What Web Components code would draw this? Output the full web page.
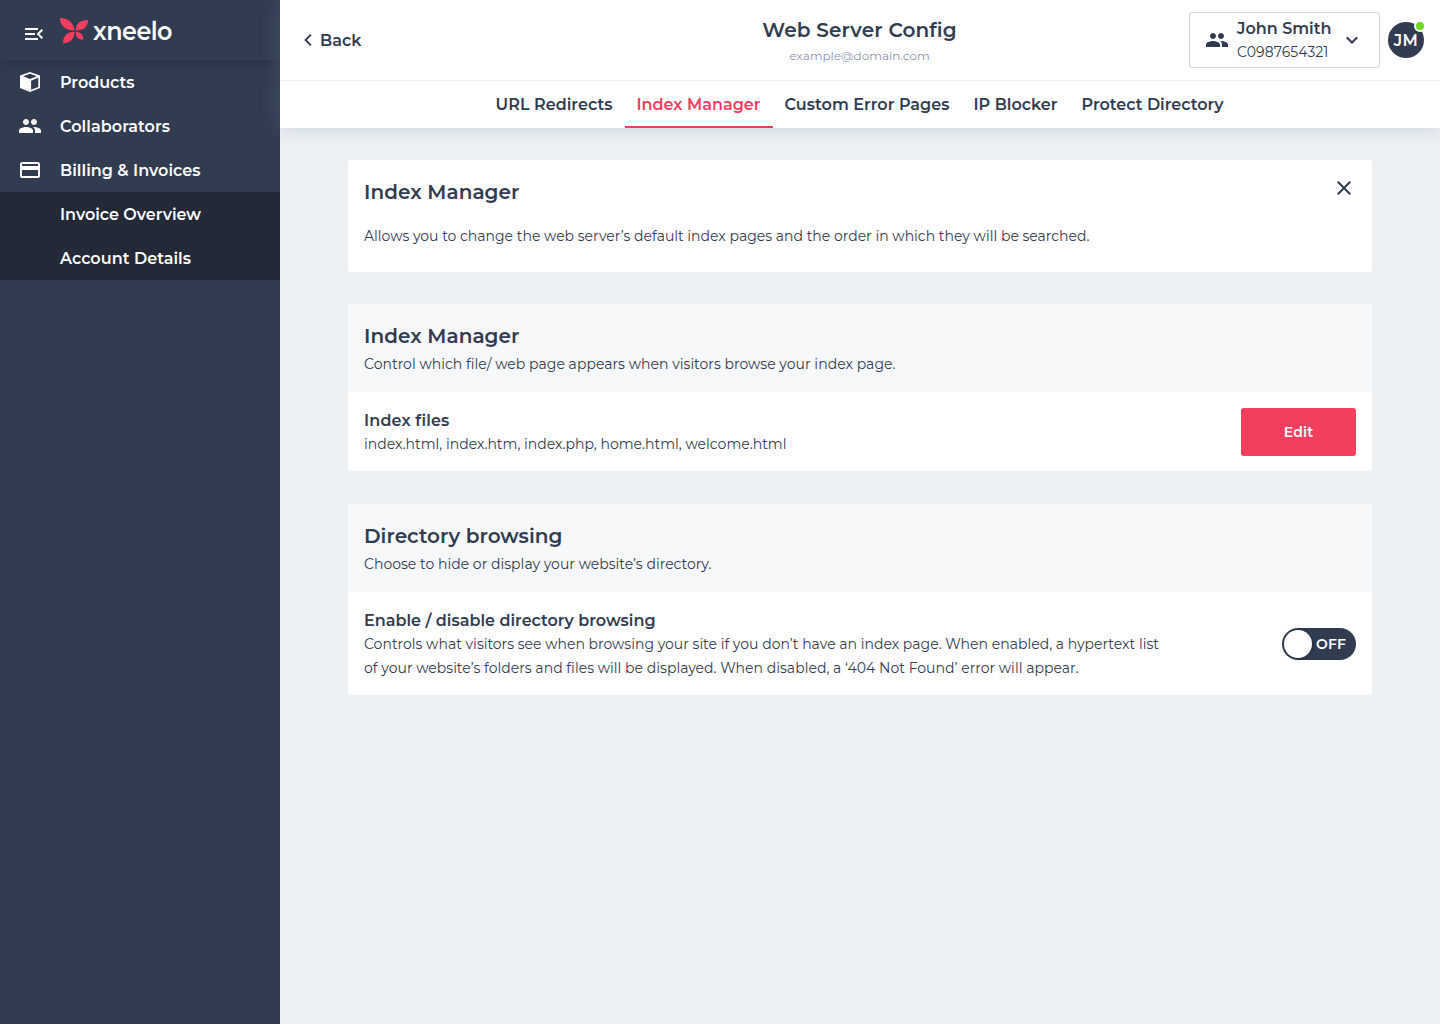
<!DOCTYPE html>
<html lang="en">
<head>
<meta charset="utf-8">
<title>Web Server Config</title>
<style>
  html, body { margin: 0; height: 100%; }
  body { font-family: Montserrat, Inter, "Liberation Sans", sans-serif; color: #323c50; background: #edf1f4; overflow: hidden; }
</style>
</head>
<body>
<app-shell></app-shell>
<script>
const define = (name, html, setup) => customElements.define(name, class extends HTMLElement {
  connectedCallback() {
    if (this.shadowRoot) return;
    const t = document.createElement('template');
    t.innerHTML = html;
    this.attachShadow({ mode: 'open' }).append(t.content.cloneNode(true));
    if (setup) setup(this, this.shadowRoot);
  }
});

/* One line of text whose advance is set in pixels: w = width, s = size, b = weight, h = line height, x = horizontal scale */
define('fit-text', `<style>
  :host { display: block; white-space: nowrap; flex: none; }
  span { display: inline-block; vertical-align: top; transform-origin: 0 50%; }
</style><span><slot></slot></span>`, (el, root) => {
  const w = +el.getAttribute('w');
  const s = +(el.getAttribute('s') || 16);
  const h = +(el.getAttribute('h') || 24);
  const x = +(el.getAttribute('x') || 1);
  /* the 16px labels sit one pixel lower in their row */
  el.style.cssText += `;width:${w}px;height:${h}px;font-size:${s}px;font-weight:${el.getAttribute('b') || 600};line-height:${s === 16 ? h + 2 : h}px`;
  const span = root.querySelector('span');
  const natural = span.getBoundingClientRect().width;
  span.style.letterSpacing = ((w / x - natural) / el.textContent.length) + 'px';
  if (x !== 1) span.style.transform = `scaleX(${x})`;
});

const icons = {
  menu: '<path d="M3 18h13v-2H3v2zM3 13h10v-2H3v2zM3 6v2h13V6H3zM21 15.59 17.42 12 21 8.41 19.59 7l-5 5 5 5L21 15.59z"/>',
  box: '<path fill-rule="evenodd" d="M12 1.900 2 5.600v12.500l10 3.900 10-3.900V5.600zM12 3.700l6.800 2.600L12 9.100 5.200 6.300zM20.300 7.800v9.100L13.100 19.800V10.800z"/>',
  people: '<path d="M16 11c1.66 0 2.99-1.34 2.99-3S17.66 5 16 5s-3 1.34-3 3 1.34 3 3 3zm-8 0c1.66 0 2.99-1.34 2.99-3S9.66 5 8 5 5 6.34 5 8s1.34 3 3 3zm0 2c-2.33 0-7 1.17-7 3.5V19h14v-2.500c0-2.330-4.670-3.500-7-3.500zm8 0c-.29 0-.62.02-.97.05 1.160.84 1.970 1.970 1.970 3.450V19h6v-2.500c0-2.330-4.670-3.500-7-3.500z"/>',
  card: '<path d="M20 4H4c-1.110 0-1.990.89-1.990 2L2 18c0 1.110.89 2 2 2h16c1.110 0 2-.89 2-2V6c0-1.110-.89-2-2-2zm0 14H4v-6h16v6zm0-10H4V6h16v2z"/>',
  down: '<path fill="none" stroke="currentColor" stroke-width="2" d="M6.700 9.200 12 14.500l5.300-5.300"/>',
  left: '<path fill="none" stroke="currentColor" stroke-width="1.900" d="M14.900 6.700 9.600 12l5.300 5.300"/>',
  close: '<path d="M19 6.410 17.590 5 12 10.590 6.410 5 5 6.410 10.590 12 5 17.590 6.410 19 12 13.410 17.590 19 19 17.590 13.410 12z"/>'
};
define('ui-icon', `<style>:host{display:block;flex:none;width:24px;height:24px}svg{display:block;width:100%;height:100%}</style>
<svg viewBox="0 0 24 24" fill="currentColor"></svg>`, (el, root) => {
  root.querySelector('svg').innerHTML = icons[el.getAttribute('name')];
});

define('brand-logo', `<style>
  :host { display: flex; align-items: flex-start; }
  svg { display: block; width: 28px; height: 26px; margin: 18px 5px 0 0; }
  fit-text { margin-top: 15px; }
</style>
<svg viewBox="0 0 28 26" fill="#f33e5f">
  <path d="M0 0C7 0 14 4.500 14.400 12.500C6 12.500 0 8 0 0z"/>
  <path d="M28 2C28 8.500 23.500 12.500 15.600 12.500C15.600 6 20 2 28 2z"/>
  <path d="M14.400 13.700C14.400 21 10 25.200 3 25.200C3 18 7 13.700 14.400 13.700z"/>
  <path d="M15.600 13.700C20.500 13.700 23.300 16.500 23.300 21.700C18.500 21.700 15.600 19 15.600 13.700z"/>
</svg>
<fit-text w="79" s="26.500" b="600" h="31" x="0.900">xneelo</fit-text>`);

define('nav-item', `<style>
  :host { display: flex; align-items: center; height: 44px; padding-left: 18px; box-sizing: border-box; }
  .icon { width: 24px; margin-right: 18px; }
</style><div class="icon"><slot name="icon"></slot></div><slot></slot>`);

define('side-bar', `<style>
  :host { display: block; width: 280px; flex: none; background: #323c50; color: #fff; }
  header { display: flex; height: 60px; padding-left: 22px; box-shadow: 0 0 16px rgba(30,37,52,.55); }
  header ui-icon { margin: 22px 14px 0 0; }
  nav { display: block; }
  .sub { background: #232936; }
</style>
<header><ui-icon name="menu"></ui-icon><brand-logo></brand-logo></header>
<nav>
  <nav-item><ui-icon slot="icon" name="box"></ui-icon><fit-text w="74.500">Products</fit-text></nav-item>
  <nav-item><ui-icon slot="icon" name="people"></ui-icon><fit-text w="110">Collaborators</fit-text></nav-item>
  <nav-item><ui-icon slot="icon" name="card"></ui-icon><fit-text w="140.500">Billing &amp; Invoices</fit-text></nav-item>
  <div class="sub">
    <nav-item><fit-text w="141">Invoice Overview</fit-text></nav-item>
    <nav-item><fit-text w="131">Account Details</fit-text></nav-item>
  </div>
</nav>`);

define('user-avatar', `<style>
  :host { display: flex; position: relative; width: 36px; height: 36px; border-radius: 50%; background: #323c50; color: #fff; align-items: center; justify-content: center; }
  i { position: absolute; right: -2px; top: -2px; width: 8px; height: 8px; border-radius: 50%; background: #6dd620; border: 2px solid #fff; }
</style><fit-text w="24.500">JM</fit-text><i></i>`);

define('account-picker', `<style>
  :host { display: flex; align-items: center; box-sizing: border-box; width: 191px; height: 56px; padding-left: 15px; border: 1px solid #d2d5da; border-radius: 3px; background: #fff; }
  div { width: 95px; margin: 0 8px; }
</style><ui-icon name="people"></ui-icon>
<div><fit-text w="94.500">John Smith</fit-text><fit-text w="91.500" s="14" b="400">C0987654321</fit-text></div>
<ui-icon name="down"></ui-icon>`);

define('tab-item', `<style>
  :host { display: flex; height: 47px; padding: 0 12px; box-sizing: border-box; align-items: center; border-bottom: 2px solid transparent; }
  :host([active]) { color: #f33e5f; border-color: #f33e5f; }
  ::slotted(*) { margin-top: 1px; }
</style><slot></slot>`);

define('top-bar', `<style>
  :host { display: block; position: relative; height: 128px; background: #fff; box-shadow: 0 0 20px rgba(110,130,180,.3); }
  .row { display: grid; grid-template-columns: 1fr auto 1fr; height: 80px; border-bottom: 1px solid #edf1f7; }
  .back { display: flex; align-items: center; padding-left: 16px; }
  .title { display: flex; flex-direction: column; align-items: center; padding: 16px 1px 0 0; }
  .mail { color: #8e96a8; }
  .user { display: flex; align-items: center; justify-content: flex-end; gap: 8px; padding-right: 16px; }
  .tabs { display: flex; justify-content: center; padding-right: 1px; }
</style>
<div class="row">
  <div class="back"><ui-icon name="left"></ui-icon><fit-text w="41.500">Back</fit-text></div>
  <div class="title"><fit-text w="194.500" s="20" h="28">Web Server Config</fit-text><fit-text class="mail" w="140.500" s="12" b="400">example@domain.com</fit-text></div>
  <div class="user"><account-picker></account-picker><user-avatar></user-avatar></div>
</div>
<div class="tabs">
  <tab-item><fit-text w="117">URL Redirects</fit-text></tab-item>
  <tab-item active><fit-text w="124">Index Manager</fit-text></tab-item>
  <tab-item><fit-text w="165">Custom Error Pages</fit-text></tab-item>
  <tab-item><fit-text w="84">IP Blocker</fit-text></tab-item>
  <tab-item><fit-text w="142">Protect Directory</fit-text></tab-item>
</div>`);

define('info-card', `<style>
  :host { display: flex; justify-content: space-between; height: 112px; box-sizing: border-box; padding: 16px; background: #fff; border-radius: 3px; }
  .body { display: flex; flex-direction: column; gap: 16px; }
</style><div class="body"><slot></slot></div><slot name="action"></slot>`);

define('setting-card', `<style>
  :host { display: block; background: #fff; border-radius: 3px; overflow: hidden; }
  header { height: 88px; box-sizing: border-box; padding: 16px; background: #f7f8fa; }
  section { display: flex; justify-content: space-between; align-items: center; padding: 16px 16px 15px; }
</style><header><slot name="head"></slot></header><section><div><slot></slot></div><slot name="action"></slot></section>`);

define('primary-button', `<style>
  :host { display: block; }
  button { display: flex; align-items: center; justify-content: center; width: 115px; height: 48px; padding: 0; border: 0; border-radius: 3px; background: #f33e5f; color: #fff; font: inherit; }
</style><button><slot></slot></button>`);

define('toggle-switch', `<style>
  :host { display: flex; align-items: center; box-sizing: border-box; width: 74px; height: 32px; padding: 2px; border-radius: 16px; background: #323c50; color: #fff; }
  i { width: 28px; height: 28px; margin-right: 4px; border-radius: 50%; background: #fff; box-shadow: 1px 1px 3px rgba(0,0,0,.3); }
</style><i></i><slot></slot>`);

define('app-shell', `<style>
  :host { display: flex; height: 100vh; }
  main { flex: 1; min-width: 0; background: #edf1f4; }
  .content { display: flex; flex-direction: column; padding: 32px 68px; }
  info-card { margin-bottom: 32px; }
  setting-card { margin-bottom: 33px; }
</style>
<side-bar></side-bar>
<main>
  <top-bar></top-bar>
  <div class="content">
    <info-card>
      <fit-text w="155.500" s="20" h="32">Index Manager</fit-text>
      <fit-text w="725.500" s="14" b="400">Allows you to change the web server’s default index pages and the order in which they will be searched.</fit-text>
      <ui-icon slot="action" name="close"></ui-icon>
    </info-card>
    <setting-card>
      <fit-text slot="head" w="155.500" s="20" h="32">Index Manager</fit-text>
      <fit-text slot="head" w="531.500" s="14" b="400">Control which file/ web page appears when visitors browse your index page.</fit-text>
      <fit-text w="85.500">Index files</fit-text>
      <fit-text w="422.500" s="14" b="400">index.html, index.htm, index.php, home.html, welcome.html</fit-text>
      <primary-button slot="action"><fit-text w="29.500" s="14">Edit</fit-text></primary-button>
    </setting-card>
    <setting-card>
      <fit-text slot="head" w="198.500" s="20" h="32">Directory browsing</fit-text>
      <fit-text slot="head" w="347.500" s="14" b="400">Choose to hide or display your website’s directory.</fit-text>
      <fit-text w="291.500">Enable / disable directory browsing</fit-text>
      <fit-text w="795" s="14" b="400">Controls what visitors see when browsing your site if you don’t have an index page. When enabled, a hypertext list</fit-text>
      <fit-text w="714.500" s="14" b="400">of your website’s folders and files will be displayed. When disabled, a ‘404 Not Found’ error will appear.</fit-text>
      <toggle-switch slot="action"><fit-text w="30" s="14">OFF</fit-text></toggle-switch>
    </setting-card>
  </div>
</main>`);
</script>
</body>
</html>
